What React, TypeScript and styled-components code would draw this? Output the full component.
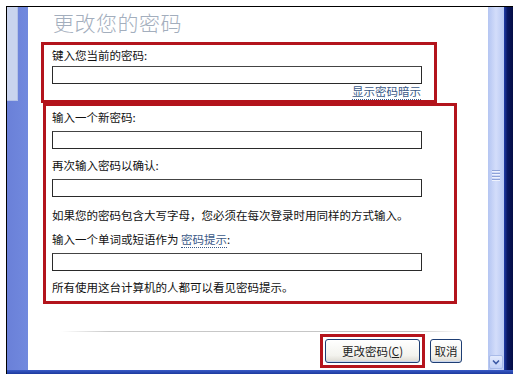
import React from "react";
import styled, { createGlobalStyle } from "styled-components";

const Global = createGlobalStyle`
  html, body { margin: 0; padding: 0; background: #fff; }
  body { font-family: "Noto Sans CJK SC", "Noto Sans", sans-serif; }
`;

const Screen = styled.div`
  width: 513px;
  height: 374px;
  box-sizing: border-box;
  padding: 6px 0 0 6px;
  background: #fff;
  display: flex;
  flex-direction: column;
  overflow: hidden;
`;

const Window = styled.div`
  flex: 1;
  border-top: 1px solid #000;
  border-left: 1px solid #000;
  display: flex;
  flex-direction: column;
`;

const WindowBody = styled.div`
  flex: 1;
  display: flex;
  min-height: 0;
`;

const BottomBar = styled.div`
  height: 4px;
  background: linear-gradient(180deg, #3a5cc8, #1d3a9e);
`;

const SidePane = styled.div`
  width: 21px;
  background: linear-gradient(90deg, #6a80d8, #7189de);
  display: flex;
  align-items: flex-start;
`;

const SideLight = styled.div`
  width: 10px;
  height: 93px;
  background: #c9d4ee;
  border-right: 1px solid #b3c1e6;
  border-bottom: 1px solid #b3c1e6;
`;

const Main = styled.div`
  flex: 1;
  background: #fff;
  display: flex;
  flex-direction: column;
  padding-left: 13px;
`;

const Title = styled.div`
  margin: 3px 0 0 12px;
  font-size: 21px;
  line-height: 25px;
  font-weight: 300;
  color: #a3aebd;
  letter-spacing: 0.5px;
`;

const Frame = styled.div<{ $width: number; $offset?: number }>`
  box-sizing: border-box;
  width: ${(p) => p.$width}px;
  margin-left: ${(p) => p.$offset ?? 0}px;
  border: 3px solid #b3141c;
  display: flex;
  flex-direction: column;
`;

const CurrentFrame = styled(Frame)`
  margin-top: 7px;
  padding: 2px 13px 0 8px;
`;

const NewFrame = styled(Frame)`
  padding: 3px 0 6px 6px;
`;

const Text = styled.div<{ $gap?: number }>`
  margin-top: ${(p) => p.$gap ?? 0}px;
  font-size: 11.5px;
  line-height: 16px;
  color: #111;
  white-space: nowrap;
`;

const Field = styled.div<{ $gap?: number }>`
  margin-top: ${(p) => p.$gap ?? 6}px;
  box-sizing: border-box;
  width: 370px;
  height: 18px;
  border: 1px solid #2a2a2a;
  border-top-color: #444;
  background: #fff;
`;

const HintLink = styled.span`
  color: #3b5a88;
  border-bottom: 1px dotted #3b5a88;
  font-size: 11.5px;
  line-height: 13px;
`;

const LinkRow = styled.div`
  display: flex;
  justify-content: flex-end;
  height: 15px;
  padding-top: 1px;
`;

const Footer = styled.div`
  display: flex;
  flex-direction: column;
`;

const Separator = styled.div`
  margin: 27px 0 0 20px;
  width: 400px;
  height: 1px;
  background: linear-gradient(90deg, rgba(200, 200, 200, 0), #c9c9c9 12%, #c4c4c4 88%, rgba(200, 200, 200, 0));
`;

const ButtonRow = styled.div`
  display: flex;
  align-items: center;
  margin: 2px 0 0 279px;
  gap: 5px;
`;

const Highlight = styled.div`
  border: 3px solid #b5141c;
  padding: 2px;
  display: flex;
`;

const Button = styled.div<{ $width: number }>`
  box-sizing: border-box;
  width: ${(p) => p.$width}px;
  height: 24px;
  border: 1px solid #1e3e74;
  border-radius: 3px;
  background: linear-gradient(180deg, #ffffff, #f3f3ee 70%, #dcdad2);
  box-shadow: inset 0 -1px 0 #c9d6ef, inset 0 1px 0 #fff;
  display: flex;
  align-items: center;
  justify-content: center;
  font-size: 11.5px;
  color: #222;
  white-space: nowrap;
`;

const Underlined = styled.span`
  text-decoration: underline;
`;

const Scrollbar = styled.div`
  width: 16px;
  background: linear-gradient(90deg, #b4c5f2, #d3ddfa 50%, #b9c9f3);
  display: flex;
  flex-direction: column;
  align-items: center;
  justify-content: space-between;
  padding-bottom: 1px;
  box-sizing: border-box;
`;

const Grip = styled.div`
  margin-top: 163px;
  width: 8px;
  display: flex;
  flex-direction: column;
  gap: 2px;
`;

const GripLine = styled.div`
  height: 1px;
  background: #8fa3d8;
  box-shadow: 0 1px 0 #eef2fd;
`;

const ArrowButton = styled.div`
  width: 14px;
  height: 14px;
  box-sizing: border-box;
  border: 1px solid #a9bbe9;
  border-radius: 2px;
  background: linear-gradient(180deg, #e3eafd, #c3d2f8);
  display: flex;
  align-items: center;
  justify-content: center;
`;

const Edge = styled.div`
  width: 9px;
  background: linear-gradient(90deg, #203ca6, #0a175f 40%, #040d45);
`;

export default function App() {
  return (
    <>
      <Global />
      <Screen>
        <Window>
          <WindowBody>
            <SidePane>
              <SideLight />
            </SidePane>
            <Main>
              <Title>更改您的密码</Title>
              <CurrentFrame $width={396}>
                <Text>键入您当前的密码:</Text>
                <Field $gap={3} />
                <LinkRow>
                  <HintLink>显示密码暗示</HintLink>
                </LinkRow>
              </CurrentFrame>
              <NewFrame $width={414} $offset={2}>
                <Text>输入一个新密码:</Text>
                <Field />
                <Text $gap={8}>再次输入密码以确认:</Text>
                <Field />
                <Text $gap={10}>如果您的密码包含大写字母，您必须在每次登录时用同样的方式输入。</Text>
                <Text $gap={8}>
                  输入一个单词或短语作为 <HintLink>密码提示</HintLink>:
                </Text>
                <Field />
                <Text $gap={8}>所有使用这台计算机的人都可以看见密码提示。</Text>
              </NewFrame>
              <Footer>
                <Separator />
                <ButtonRow>
                  <Highlight>
                    <Button $width={95}>
                      更改密码(<Underlined>C</Underlined>)
                    </Button>
                  </Highlight>
                  <Button $width={32}>取消</Button>
                </ButtonRow>
              </Footer>
            </Main>
            <Scrollbar>
              <Grip>
                <GripLine />
                <GripLine />
                <GripLine />
                <GripLine />
              </Grip>
              <ArrowButton>
                <svg width="8" height="6" viewBox="0 0 8 6">
                  <path d="M1 1.5 L4 4.5 L7 1.5" fill="none" stroke="#3d5aa6" strokeWidth="1.6" />
                </svg>
              </ArrowButton>
            </Scrollbar>
            <Edge />
          </WindowBody>
          <BottomBar />
        </Window>
      </Screen>
    </>
  );
}
